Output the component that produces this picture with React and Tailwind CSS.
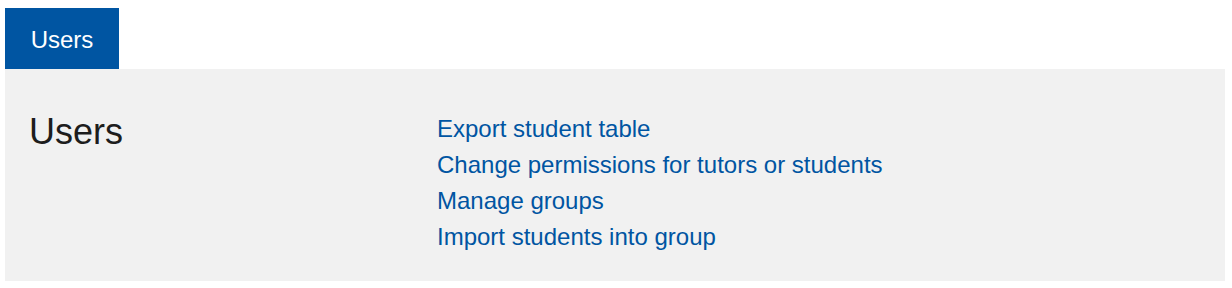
const links = [
  'Export student table',
  'Change permissions for tutors or students',
  'Manage groups',
  'Import students into group',
];

export default function App() {
  return (
    <div className="pt-2 px-[5px] bg-white font-['Liberation_Sans',Arial,sans-serif]">
      <div className="flex">
        <div className="w-[114px] h-[61px] flex items-center justify-center pt-[2px] bg-[#0055a2] text-white text-[24px]">
          Users
        </div>
      </div>
      <div className="w-[1220px] h-[212px] bg-[#f1f1f1] flex pt-[42px] pl-6">
        <h2 className="w-[408px] text-[36px] leading-[41px] text-[#1d1d1d]">Users</h2>
        <div className="flex flex-col">
          {links.map((l) => (
            <a key={l} href="#" className="text-[24px] leading-[36px] text-[#0055a2]">
              {l}
            </a>
          ))}
        </div>
      </div>
    </div>
  );
}
